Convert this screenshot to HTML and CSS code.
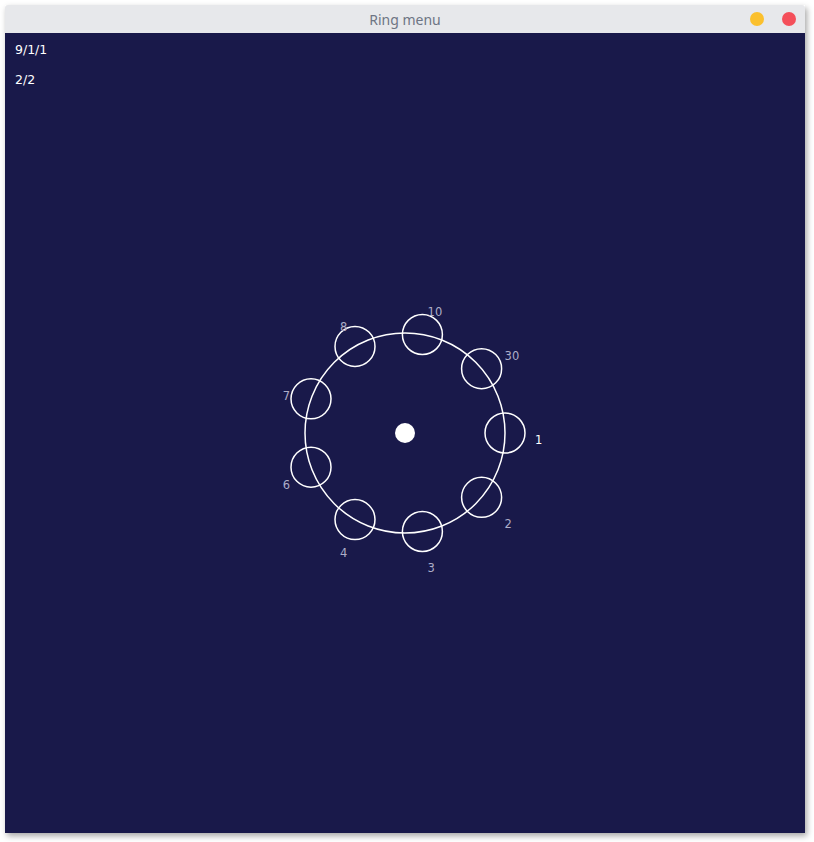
FILE: index.html
```html
<!DOCTYPE html>
<html>
<head>
<meta charset="utf-8">
<title>Ring menu</title>
<link rel="stylesheet" href="styles.css">
</head>
<body>
<div class="window">
  <div class="titlebar">
    <span class="title">Ring menu</span>
    <div class="controls">
      <span class="btn btn-min"></span>
      <span class="btn btn-close"></span>
    </div>
  </div>
  <div class="content">
    <div class="info">
      <div class="line">9/1/1</div>
      <div class="line">2/2</div>
    </div>
    <svg class="canvas" width="800" height="800" viewBox="0 -1 800 800">
      <circle cx="400" cy="399" r="100" class="ring"/>
      <circle cx="400" cy="399" r="10" class="dot"/>
      <circle cx="500" cy="399" r="20" class="item"/>
      <circle cx="476.6" cy="463.3" r="20" class="item"/>
      <circle cx="417.4" cy="497.5" r="20" class="item"/>
      <circle cx="350" cy="485.6" r="20" class="item"/>
      <circle cx="306" cy="433.2" r="20" class="item"/>
      <circle cx="306" cy="364.8" r="20" class="item"/>
      <circle cx="350" cy="312.4" r="20" class="item"/>
      <circle cx="417.4" cy="300.5" r="20" class="item"/>
      <circle cx="476.6" cy="334.7" r="20" class="item"/>
      <text x="530" y="410" class="label active">1</text>
      <text x="499.6" y="493.6" class="label">2</text>
      <text x="422.6" y="538" class="label">3</text>
      <text x="335" y="522.6" class="label">4</text>
      <text x="277.8" y="454.5" class="label">6</text>
      <text x="277.8" y="365.5" class="label">7</text>
      <text x="335" y="297.4" class="label">8</text>
      <text x="422.6" y="282" class="label">10</text>
      <text x="499.6" y="326.4" class="label">30</text>
    </svg>
  </div>
</div>
</body>
</html>
```
FILE: styles.css
```css
html, body {
  margin: 0;
  padding: 0;
  background: #ffffff;
}
body {
  width: 814px;
  height: 842px;
  overflow: hidden;
}
.window {
  margin: 5px 0 0 5px;
  width: 800px;
  box-shadow: 2px 3px 6px rgba(0, 0, 0, 0.35);
}
.titlebar {
  height: 28px;
  background: #e7e8eb;
  display: flex;
  align-items: center;
  justify-content: center;
  position: relative;
  border-radius: 3px 3px 0 0;
}
.title {
  font-family: "Noto Sans", "DejaVu Sans", sans-serif;
  font-size: 14px;
  color: #6e7584;
}
.controls {
  position: absolute;
  right: 9px;
  top: 7px;
  display: flex;
  gap: 18px;
}
.btn {
  width: 14px;
  height: 14px;
  border-radius: 50%;
  display: block;
}
.btn-min { background: #fbc02d; }
.btn-close { background: #f44f5a; }
.content {
  position: relative;
  height: 800px;
  background: #19194a;
}
.info {
  position: relative;
  z-index: 1;
  padding: 8px 0 0 10px;
  display: flex;
  flex-direction: column;
  gap: 12px;
}
.line {
  font-family: "DejaVu Sans", sans-serif;
  font-size: 12.5px;
  line-height: 18px;
  color: #ffffff;
}
.canvas {
  position: absolute;
  left: 0;
  top: 0;
}
.ring, .item {
  fill: none;
  stroke: #ffffff;
  stroke-width: 1.5;
}
.dot {
  fill: #ffffff;
}
.label {
  font-family: "DejaVu Sans", sans-serif;
  font-size: 11.5px;
  fill: #adadc8;
}
.label.active {
  fill: #ffffff;
}
```
